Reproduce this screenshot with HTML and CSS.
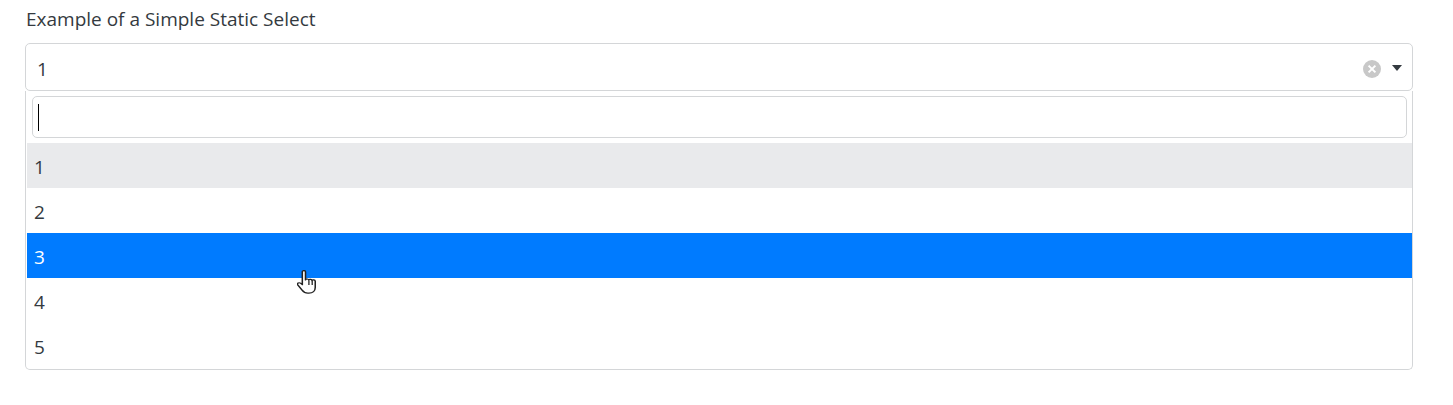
FILE: index.html
```html
<!DOCTYPE html>
<html lang="en">
  <head>
    <meta charset="UTF-8" />
    <title>Simple Static Select</title>
    <link rel="stylesheet" href="styles.css">
  </head>

  <body>
    <label class="etiqueta">Example of a Simple Static Select</label>

    <div class="select">
      <div class="select-control">
        <span class="select-valor">1</span>
        <svg class="select-limpiar" width="20" height="20" viewBox="0 0 20 20">
          <circle cx="10" cy="10" r="9" fill="#c8c8c8" />
          <path d="M6.6 6.6l6.8 6.8M13.4 6.6l-6.8 6.8" stroke="#fff" stroke-width="2" fill="none" />
        </svg>
        <span class="select-flecha"></span>
      </div>

      <div class="select-menu">
        <div class="select-busqueda">
          <input type="text" class="select-input" />
          <span class="select-cursor"></span>
        </div>
        <ul class="select-opciones">
          <li class="opcion opcion-elegida">1</li>
          <li class="opcion">2</li>
          <li class="opcion opcion-activa">3</li>
          <li class="opcion">4</li>
          <li class="opcion">5</li>
        </ul>
      </div>
    </div>

    <svg class="puntero" width="19" height="24" viewBox="1 0.500 15 24" preserveAspectRatio="none">
      <path d="M5.200 2.200c0-1.500 2.500-1.500 2.500 0v8.300c.2-1.400 2.500-1.400 2.600.2.200-1.300 2.500-1.200 2.600.5.300-1.200 2.400-1 2.500.6v6.200c0 3.200-2 5.600-5 5.600H9.500c-2.300 0-3.400-1.200-4.500-3L1.600 15.400c-.8-1.500 1-2.800 2.200-1.700l1.400 1.500z" fill="#fff" stroke="#222" stroke-width="1.200" stroke-linejoin="round" />
      <path d="M10.400 11v4.500M13 11.500v4" stroke="#222" stroke-width="1" fill="none" />
    </svg>
  </body>
</html>
```

FILE: styles.css
```css
html, body {
  background-color: #fff;
}

body {
  margin: 0;
  padding: 7px 40px 0 25px;
  font-family: "Open Sans", "Noto Sans", Arial, sans-serif;
  font-size: 19px;
  color: #343a40;
}

.etiqueta {
  display: block;
  height: 36px;
  line-height: 24px;
  margin-left: 1px;
}

.select-control {
  display: flex;
  align-items: center;
  height: 48px;
  box-sizing: border-box;
  padding: 4px 12px 0 11px;
  border: 1px solid #d4d6d8;
  border-radius: 5px;
}

.select-valor {
  flex: 1;
}

.select-limpiar {
  margin-top: -1px;
  margin-right: 10px;
}

.select-flecha {
  width: 0;
  height: 0;
  margin-top: -3px;
  margin-right: -2px;
  border-top: 6px solid #343a40;
  border-left: 5px solid transparent;
  border-right: 5px solid transparent;
}

.select-menu {
  height: 279px;
  box-sizing: border-box;
  border: 1px solid #d4d6d8;
  border-top: none;
  border-radius: 0 0 5px 5px;
}

.select-busqueda {
  position: relative;
  padding: 5px 5px 5px 6px;
}

.select-input {
  display: block;
  width: 100%;
  height: 42px;
  box-sizing: border-box;
  border: 1px solid #d4d6d8;
  border-radius: 5px;
  outline: none;
}

.select-cursor {
  position: absolute;
  left: 12px;
  top: 13px;
  width: 1px;
  height: 27px;
  background-color: #000;
}

.select-opciones {
  list-style: none;
  margin: 0 0 0 1px;
  padding: 0;
}

.opcion {
  height: 45px;
  line-height: 48px;
  padding-left: 7px;
}

.opcion-elegida {
  background-color: #e9eaec;
}

.opcion-activa {
  background-color: #007bff;
  color: #fff;
}

.puntero {
  position: absolute;
  left: 297px;
  top: 270px;
}
```
